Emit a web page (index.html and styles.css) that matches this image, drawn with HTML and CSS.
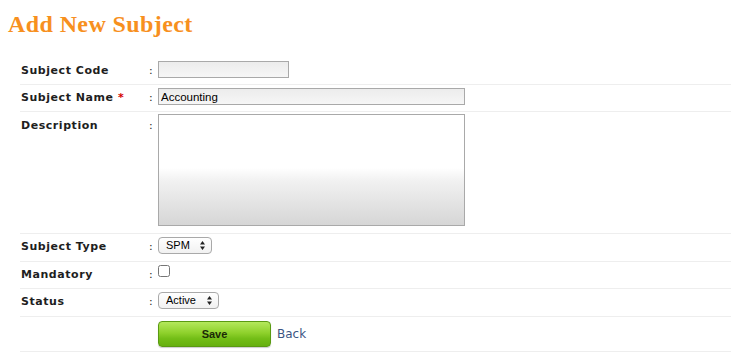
FILE: index.html
```html
<!DOCTYPE html>
<html>
<head>
<meta charset="utf-8">
<link rel="stylesheet" href="styles.css">
</head>
<body>
<h1 class="title">Add New Subject</h1>
<form class="form">
  <div class="row">
    <label class="label">Subject Code</label>
    <span class="colon">:</span>
    <div class="control"><input class="text short" type="text"></div>
  </div>
  <div class="row">
    <label class="label">Subject Name <span class="req">*</span></label>
    <span class="colon">:</span>
    <div class="control"><input class="text long" type="text" value="Accounting"></div>
  </div>
  <div class="row row-desc">
    <label class="label label-desc">Description</label>
    <span class="colon colon-desc">:</span>
    <div class="control"><textarea class="area"></textarea></div>
  </div>
  <div class="row row-select">
    <label class="label">Subject Type</label>
    <span class="colon">:</span>
    <div class="control">
      <span class="select-wrap spm">
        <select class="select"><option>SPM</option></select>
        <svg class="arrows" width="5" height="9" viewBox="0 0 5 9"><path d="M2.5 0 L5 3.5 H0 Z M2.5 9 L5 5.5 H0 Z" fill="#222"/></svg>
      </span>
    </div>
  </div>
  <div class="row">
    <label class="label">Mandatory</label>
    <span class="colon">:</span>
    <div class="control"><input class="check" type="checkbox"></div>
  </div>
  <div class="row row-select">
    <label class="label">Status</label>
    <span class="colon">:</span>
    <div class="control">
      <span class="select-wrap active">
        <select class="select"><option>Active</option></select>
        <svg class="arrows" width="5" height="9" viewBox="0 0 5 9"><path d="M2.5 0 L5 3.5 H0 Z M2.5 9 L5 5.5 H0 Z" fill="#222"/></svg>
      </span>
    </div>
  </div>
  <div class="row row-actions">
    <span class="label"></span>
    <span class="colon"></span>
    <div class="control actions">
      <button class="save" type="button">Save</button>
      <a class="back" href="#">Back</a>
    </div>
  </div>
</form>
</body>
</html>
```
FILE: styles.css
```css
html, body {
  margin: 0;
  padding: 0;
  background: #fff;
}
body {
  font-family: "DejaVu Sans", Verdana, sans-serif;
  color: #222;
}
.title {
  margin: 9px 0 0 8px;
  font-family: "Liberation Serif", Georgia, serif;
  font-weight: bold;
  font-size: 24px;
  letter-spacing: 0.4px;
  line-height: 30px;
  color: #f7901e;
}
.form {
  margin: 19px 0 0 20px;
  width: 711px;
}
.row {
  display: grid;
  grid-template-columns: 129px 9px 1fr;
  align-items: start;
  padding: 3px 0 6px;
  border-bottom: 1px solid #eeeeee;
}
.row-desc {
  padding: 2px 0 7px;
}
.row-select {
  padding: 3px 0 7px;
}
.row-actions {
  padding: 4px 0 4px;
}
.label {
  padding-left: 1px;
  padding-top: 1px;
  height: 16px;
  font-size: 11px;
  font-weight: bold;
  letter-spacing: 0.55px;
  line-height: 17px;
  color: #1e1e1e;
}
.label-desc,
.colon-desc {
  margin-top: 2px;
}
.req {
  color: #d40000;
}
.colon {
  padding-top: 1px;
  height: 16px;
  font-size: 11px;
  line-height: 17px;
  color: #222;
}
.control {
  display: flex;
  align-items: flex-start;
}
.text {
  box-sizing: border-box;
  display: block;
  height: 17px;
  margin: 0;
  padding: 0 2px;
  border: 1px solid #a9a9a9;
  background: linear-gradient(#ececec, #f6f6f6);
  font-family: "Liberation Sans", Arial, sans-serif;
  font-size: 11.5px;
  color: #000;
  outline: none;
}
.short { width: 131px; }
.long { width: 307px; }
.area {
  box-sizing: border-box;
  display: block;
  width: 307px;
  height: 112px;
  margin: 0;
  border: 1px solid #a9a9a9;
  resize: none;
  background: linear-gradient(#ffffff 0%, #ffffff 48%, #f1f1f1 60%, #d6d6d6 100%);
  outline: none;
}
.select-wrap {
  position: relative;
  display: block;
  height: 17px;
}
.select {
  box-sizing: border-box;
  display: block;
  -webkit-appearance: none;
  appearance: none;
  height: 17px;
  margin: 0;
  padding: 0 0 0 7px;
  border: 1px solid #a9a9a9;
  border-radius: 4px;
  background: linear-gradient(#ffffff, #f1f1f1);
  font-family: "Liberation Sans", Arial, sans-serif;
  font-size: 11px;
  line-height: 15px;
  color: #000;
  outline: none;
}
.spm .select { width: 54px; }
.active .select { width: 61px; }
.arrows {
  position: absolute;
  top: 4px;
  right: 7px;
  display: block;
}
.check {
  display: block;
  width: 12px;
  height: 12px;
  margin: 0;
}
.actions {
  align-items: center;
  gap: 6px;
}
.save {
  box-sizing: border-box;
  display: block;
  width: 113px;
  height: 26px;
  margin: 0;
  padding: 0;
  border: 1px solid #5a9a12;
  border-radius: 4px;
  background: linear-gradient(#b4e85c 0%, #8fd12c 45%, #72bd16 70%, #66b00f 100%);
  box-shadow: 0 1px 1px rgba(0,0,0,0.2);
  font-family: "Liberation Sans", Arial, sans-serif;
  font-size: 11px;
  font-weight: bold;
  color: #1b2a06;
  cursor: pointer;
}
.back {
  font-size: 12px;
  color: #3b5583;
  text-decoration: none;
}
```
